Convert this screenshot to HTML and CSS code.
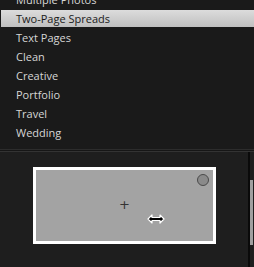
FILE: index.html
```html
<!DOCTYPE html>
<html lang="en">
<head>
<meta charset="UTF-8">
<title>Layout Styles</title>
<link rel="stylesheet" href="styles.css">
</head>
<body>
    <ul class="styles">
        <li class="cut">Multiple Photos</li>
        <li class="selected">Two-Page Spreads</li>
        <li>Text Pages</li>
        <li>Clean</li>
        <li>Creative</li>
        <li>Portfolio</li>
        <li>Travel</li>
        <li>Wedding</li>
    </ul>
    <div class="divider"></div>
    <div class="preview-area">
        <div class="preview">
            <div class="page">
                <span class="dot"></span>
                <span class="plus">+</span>
                <svg class="cursor" width="18" height="10" viewBox="0 0 18 10">
                    <path d="M1 5 L5 1 L5 3.5 L13 3.5 L13 1 L17 5 L13 9 L13 6.5 L5 6.5 L5 9 Z" fill="#000" stroke="#fff" stroke-width="1.2" stroke-linejoin="round"/>
                </svg>
            </div>
        </div>
        <div class="scrollbar"></div>
    </div>
</body>
</html>
```
FILE: styles.css
```css
body {
    margin: 0;
    background-color: #1a1a1a;
    font-family: "Open Sans", "DejaVu Sans", sans-serif;
    font-size: 11px;
    color: #d6d6d6;
    width: 254px;
    height: 267px;
    overflow: hidden;
}

.styles {
    list-style: none;
    margin: -10px 0 0 0;
    padding: 0;
}

.styles li {
    height: 19px;
    line-height: 19px;
    padding-left: 16px;
}

.styles li.selected {
    margin-left: 1px;
    padding-left: 15px;
    height: 17px;
    line-height: 17px;
    margin-top: 1px;
    margin-bottom: 1px;
    background: linear-gradient(#dcdcdc, #bfbfbf);
    color: #1a1a1a;
}

.divider {
    margin-top: 7px;
    height: 1px;
    border-top: 1px solid #2c2c2c;
    border-bottom: 1px solid #333;
    background-color: #161616;
}

.preview-area {
    display: flex;
    height: 122px;
    background-color: #1e1e1e;
}

.preview {
    flex: 1;
    padding: 15px 0 0 33px;
}

.page {
    position: relative;
    width: 177px;
    height: 71px;
    border: 3px solid #fff;
    background-color: #a3a3a3;
}

.dot {
    position: absolute;
    top: 4px;
    right: 4px;
    width: 10px;
    height: 10px;
    border-radius: 50%;
    border: 1px solid #4a4a4a;
    background-color: #8a8a8a;
}

.plus {
    position: absolute;
    left: 83px;
    top: 28px;
    font-size: 13px;
    line-height: 13px;
    color: #333;
    font-family: "DejaVu Sans", sans-serif;
}

.cursor {
    position: absolute;
    left: 111px;
    top: 44px;
}

.scrollbar {
    width: 3px;
    margin-right: 1px;
    border-left: 2px solid #0a0a0a;
    background: linear-gradient(#1e1e1e 28px, #a0a0a0 28px, #a0a0a0 93px, #1e1e1e 93px);
}
```
